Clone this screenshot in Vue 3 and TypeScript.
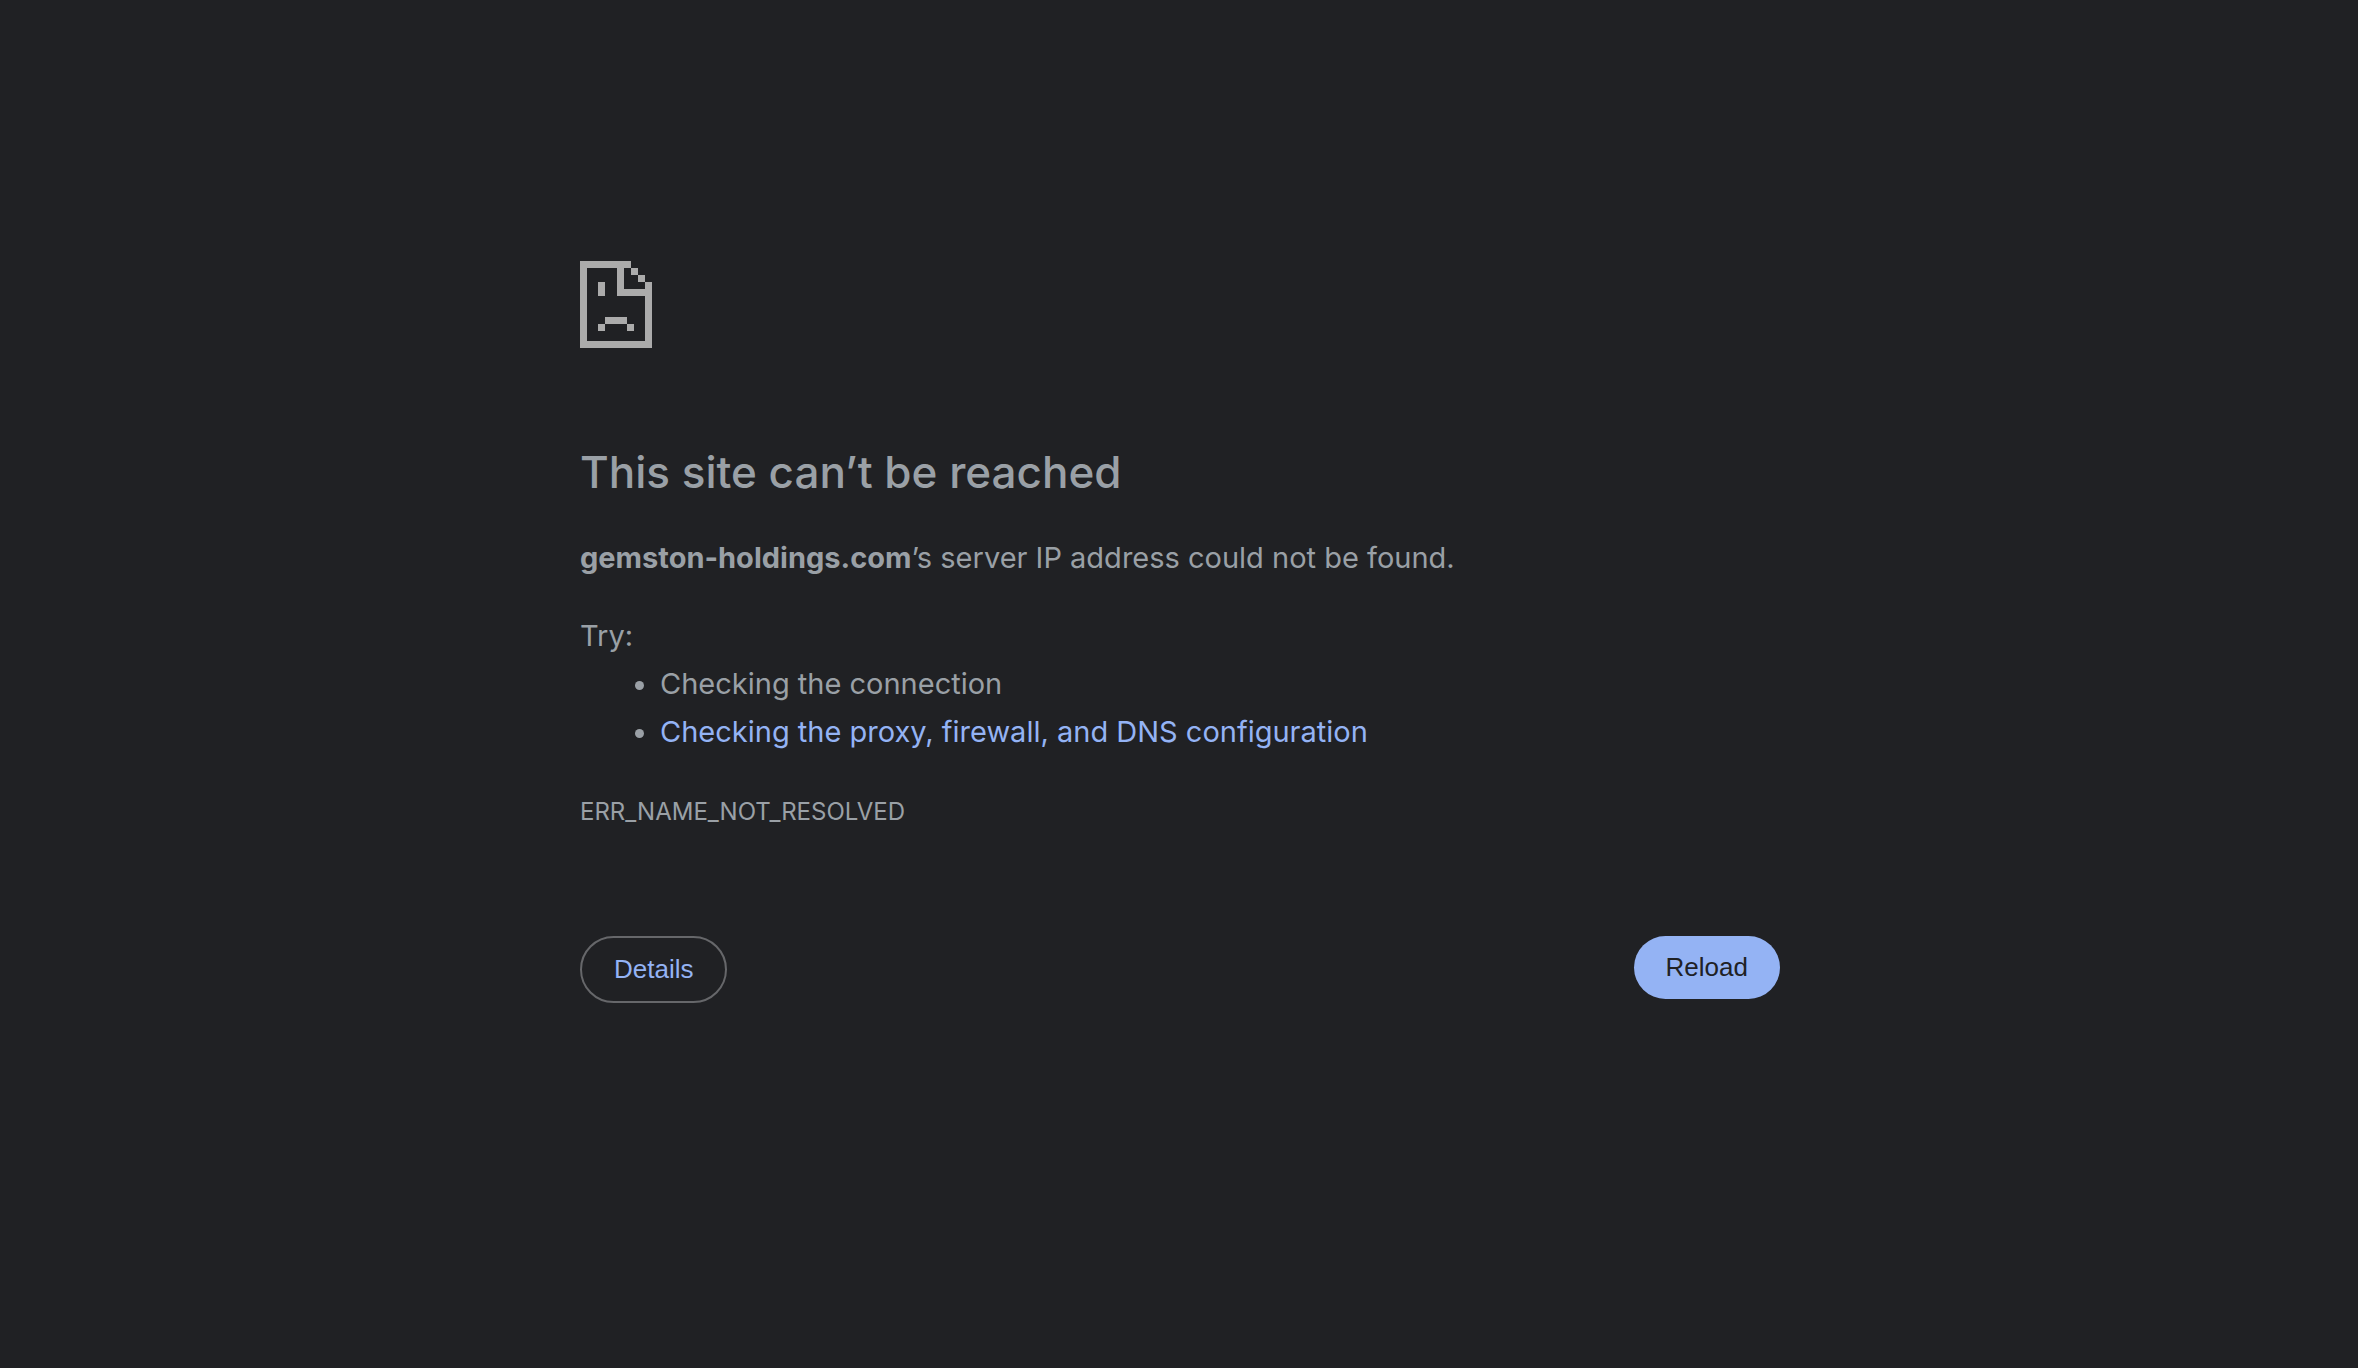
<script setup lang="ts">
const host = 'gemston-holdings.com'
const errorCode = 'ERR_NAME_NOT_RESOLVED'

function reload(): void {
  window.location.reload()
}
</script>

<template>
  <main class="page">
    <div class="content">
      <svg class="icon" viewBox="0 0 72 87" shape-rendering="crispEdges" aria-hidden="true">
        <path d="M0 0H51V7H0ZM0 7H7V87H0ZM7 80H72V87H7ZM65 21H72V80H65ZM37 7H44V35H37ZM44 28H65V35H44ZM51 7H58V14H51ZM58 14H65V21H58ZM18 21H25V35H18ZM25 56H47V63H25ZM18 63H25V70H18ZM47 63H54V70H47Z" />
      </svg>
      <h1>This site can’t be reached</h1>
      <p class="summary"><strong>{{ host }}</strong>’s server IP address could not be found.</p>
      <div class="suggestions">
        <p>Try:</p>
        <ul>
          <li>Checking the connection</li>
          <li><a href="#buttons">Checking the proxy, firewall, and DNS configuration</a></li>
        </ul>
      </div>
      <p class="code">{{ errorCode }}</p>
      <div id="buttons" class="buttons">
        <button type="button" class="details">Details</button>
        <button type="button" class="reload" @click="reload">Reload</button>
      </div>
    </div>
  </main>
</template>

<style>
body {
  background: #202124;
}
</style>

<style scoped>
.page {
  padding: 261px 24px 48px 26px;
  color: #9aa0a6;
  font-family: Inter, "Liberation Sans", sans-serif;
  font-size: 29px;
  line-height: 48px;
}

.content {
  max-width: 1200px;
  margin: 0 auto;
}

.icon {
  display: block;
  width: 72px;
  height: 87px;
  fill: #ababab;
}

h1 {
  margin: 94px 0 32px;
  font-size: 44px;
  font-weight: 500;
  line-height: 60px;
}

p {
  margin: 0;
}

.suggestions {
  margin-top: 30px;
}

ul {
  margin: 0;
  padding-left: 80px;
}

a {
  color: #94b3f4;
  text-decoration: none;
}

.code {
  margin-top: 32px;
  font-size: 24px;
}

.buttons {
  display: flex;
  justify-content: space-between;
  align-items: flex-start;
  margin-top: 100px;
}

button {
  padding: 16px 32px;
  border: 0;
  border-radius: 40px;
  font-family: "Liberation Sans", Arial, sans-serif;
  font-size: 26px;
  line-height: 31px;
  cursor: pointer;
}

.details {
  border: 2px solid #66676a;
  background: transparent;
  color: #94b3f4;
}

.reload {
  background: #94b3f4;
  color: #202124;
}
</style>
